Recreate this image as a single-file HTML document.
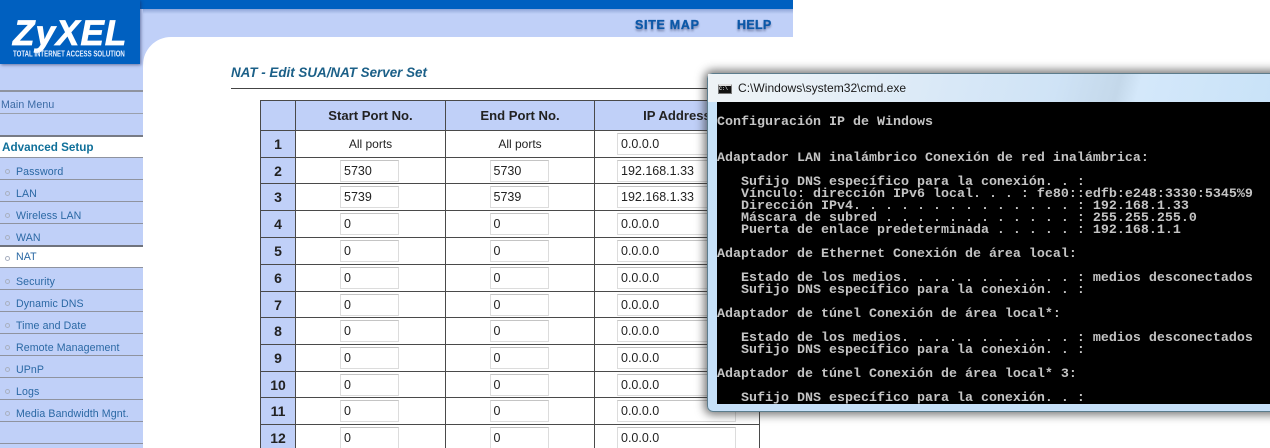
<!DOCTYPE html>
<html><head><meta charset="utf-8"><style>
html,body{margin:0;padding:0;background:#fff}
#p{position:relative;width:1270px;height:448px;overflow:hidden;background:#fff;font-family:"Liberation Sans",Arial,sans-serif}
.a{position:absolute}
.m{position:absolute;left:0;width:143px;height:21px;font-size:10.6px;line-height:21px;color:#2a68a4;border-bottom:1px solid #8f939f;box-sizing:content-box;letter-spacing:.1px}
.m span{position:absolute;left:16px;top:4px;white-space:nowrap}
.m i{position:absolute;left:5px;top:11px;width:3px;height:3px;border:1px solid #a8b0c0;border-radius:50%}
table{position:absolute;left:260px;top:100px;border-collapse:collapse;table-layout:fixed;width:500px;font-size:12px;color:#222}
td{border:1px solid #4a4a4a;padding:0;text-align:center;height:26px;background:#fff;box-sizing:border-box}
td.n{background:#c0d0f8;font-weight:bold;font-size:14px;color:#222}
th{border:1px solid #4a4a4a;background:#c0d0f8;font-size:13.1px;color:#222;height:30px;padding:0;box-sizing:border-box}
td b{display:block;font-weight:normal;box-sizing:border-box;height:22px;line-height:21px;width:59px;margin:0 auto;position:relative;left:-1px;text-align:left;padding-left:3px;border:1px solid #dcdcdc;border-top-color:#c4c4c4;font-size:12.5px;background:#fff}
td b.w{width:119px;margin-left:22px;padding-left:3px;left:0}
#cmd{position:absolute;left:707px;top:73px;width:581px;height:339px;border-radius:6px 0 0 6px;background:linear-gradient(#e8f2fb,#c8e2f8 28px,#c6e0f8);box-shadow:0 0 9px 3px rgba(40,40,40,.62);border:1px solid #5c7c8c;box-sizing:border-box}
#tb{position:absolute;left:0;top:0;right:0;height:28px;background:linear-gradient(105deg,#eef3f6 0,#e9f1f7 90px,#d8e8f7 240px,#cfe3f6 340px,#c4d8ea 400px,#d4e8fa 420px,#c8e2f8 560px)}
#blk{position:absolute;left:9px;top:28px;width:570px;height:302px;background:#000;overflow:hidden}
pre{position:absolute;left:0;top:3px;margin:0;font-family:"Liberation Mono",monospace;font-weight:bold;font-size:13.33px;line-height:12px;color:#c4c4c4;white-space:pre}
</style></head><body><div id="p">
<div class="a" style="left:0;top:0;width:793px;height:9px;background:#0060c0"></div>
<div class="a" style="left:140px;top:9px;width:653px;height:5px;background:linear-gradient(#8fa6d8,#c0d0f8)"></div>
<div class="a" style="left:140px;top:14px;width:653px;height:23px;background:#c0d0f8"></div>
<div class="a" style="left:0;top:64px;width:143px;height:384px;background:#c0d0f8"></div>
<div class="a" style="left:140px;top:9px;width:3px;height:60px;background:#c0d0f8"></div>
<div class="a" style="left:143px;top:37px;width:40px;height:40px;background:#c0d0f8"></div>
<div class="a" style="left:143px;top:37px;width:650px;height:411px;background:#fff;border-radius:28px 0 0 0"></div>
<div class="a" style="left:793px;top:37px;width:477px;height:411px;background:#fff"></div>
<div class="a" style="left:0;top:0;width:140px;height:64px;background:#0060c0;box-shadow:1px 1px 3px rgba(30,40,90,.55)"></div>
<div class="a" style="left:13px;top:16px;width:120px;color:#fff;font-weight:bold;font-style:italic;font-size:35px;line-height:36px;letter-spacing:1.1px;-webkit-text-stroke:.8px #fff;white-space:nowrap">ZyXEL</div>
<div class="a" style="left:13px;top:50px;color:#e8f0ff;font-weight:bold;font-size:6.1px;line-height:10px;white-space:nowrap;letter-spacing:0;transform:scaleY(1.3);transform-origin:0 50%">TOTAL INTERNET ACCESS SOLUTION</div>
<div class="a" style="left:635px;top:18px;color:#0c58a8;font-weight:bold;font-size:12.5px;letter-spacing:.7px;line-height:15px;-webkit-text-stroke:.3px #0c58a8;text-shadow:0 2px 2px rgba(40,50,90,.55);white-space:nowrap">SITE MAP</div>
<div class="a" style="left:737px;top:18px;color:#0c58a8;font-weight:bold;font-size:12.5px;letter-spacing:.3px;line-height:15px;-webkit-text-stroke:.3px #0c58a8;text-shadow:0 2px 2px rgba(40,50,90,.55);white-space:nowrap">HELP</div>

<div class="a" style="left:0;top:90px;width:143px;height:2px;background:#8f939f"></div>
<div class="m" style="top:94px;border:0;color:#3a6aa4"><span style="left:1px;top:1px">Main Menu</span></div>
<div class="a" style="left:0;top:113px;width:143px;height:1px;background:#9aa0ac"></div>
<div class="a" style="left:0;top:135px;width:143px;height:2px;background:#777b85"></div>
<div class="a" style="left:0;top:137px;width:143px;height:20px;background:#fff;color:#10709a;font-weight:bold;font-size:11.7px;line-height:22px;text-indent:2px">Advanced Setup</div>
<div class="a" style="left:0;top:157px;width:143px;height:1px;background:#8f939f"></div>
<div class="m" style="top:158px"><i></i><span>Password</span></div>
<div class="m" style="top:180px"><i></i><span>LAN</span></div>
<div class="m" style="top:202px"><i></i><span>Wireless LAN</span></div>
<div class="m" style="top:224px;border-bottom:2px solid #6f737d"><i></i><span>WAN</span></div>
<div class="m" style="top:247px;height:20px;background:#fff;line-height:20px"><i style="top:9px"></i><span style="top:0">NAT</span></div>
<div class="m" style="top:268px"><i></i><span>Security</span></div>
<div class="m" style="top:290px"><i></i><span>Dynamic DNS</span></div>
<div class="m" style="top:312px"><i></i><span>Time and Date</span></div>
<div class="m" style="top:334px"><i></i><span>Remote Management</span></div>
<div class="m" style="top:356px"><i></i><span>UPnP</span></div>
<div class="m" style="top:378px"><i></i><span>Logs</span></div>
<div class="m" style="top:400px"><i></i><span>Media Bandwidth Mgnt.</span></div>
<div class="m" style="top:422px"></div>

<div class="a" style="left:231px;top:64px;color:#1c6088;font-weight:bold;font-style:italic;font-size:13.4px;line-height:17px;white-space:nowrap">NAT - Edit SUA/NAT Server Set</div>
<div class="a" style="left:231px;top:88px;width:530px;height:1px;background:#444"></div>

<table>
<colgroup><col style="width:35px"><col style="width:150px"><col style="width:149px"><col style="width:165px"></colgroup>
<tr><th></th><th>Start Port No.</th><th>End Port No.</th><th>IP Address</th></tr>
<tr style="height:27px"><td class="n">1</td><td>All ports</td><td>All ports</td><td><b class="w">0.0.0.0</b></td></tr>
<tr><td class="n">2</td><td><b>5730</b></td><td><b>5730</b></td><td><b class="w">192.168.1.33</b></td></tr>
<tr style="height:27px"><td class="n">3</td><td><b>5739</b></td><td><b>5739</b></td><td><b class="w">192.168.1.33</b></td></tr>
<tr style="height:27px"><td class="n">4</td><td><b>0</b></td><td><b>0</b></td><td><b class="w">0.0.0.0</b></td></tr>
<tr style="height:27px"><td class="n">5</td><td><b>0</b></td><td><b>0</b></td><td><b class="w">0.0.0.0</b></td></tr>
<tr style="height:27px"><td class="n">6</td><td><b>0</b></td><td><b>0</b></td><td><b class="w">0.0.0.0</b></td></tr>
<tr><td class="n">7</td><td><b>0</b></td><td><b>0</b></td><td><b class="w">0.0.0.0</b></td></tr>
<tr style="height:27px"><td class="n">8</td><td><b>0</b></td><td><b>0</b></td><td><b class="w">0.0.0.0</b></td></tr>
<tr style="height:27px"><td class="n">9</td><td><b>0</b></td><td><b>0</b></td><td><b class="w">0.0.0.0</b></td></tr>
<tr><td class="n">10</td><td><b>0</b></td><td><b>0</b></td><td><b class="w">0.0.0.0</b></td></tr>
<tr style="height:27px"><td class="n">11</td><td><b>0</b></td><td><b>0</b></td><td><b class="w">0.0.0.0</b></td></tr>
<tr style="height:27px"><td class="n">12</td><td><b>0</b></td><td><b>0</b></td><td><b class="w">0.0.0.0</b></td></tr>
</table>

<div id="cmd">
<div id="tb"></div>
<div class="a" style="left:10px;top:10px;width:14px;height:10px;background:#111;border:1px solid #777;box-sizing:border-box;border-top:2px solid #ddd;color:#ddd;font:bold 5px/7px 'Liberation Mono',monospace;overflow:hidden">C:\</div>
<div class="a" style="left:30px;top:7px;font-size:12.05px;line-height:15px;color:#1a1a1a;white-space:nowrap">C:\Windows\system32\cmd.exe</div>
<div id="blk"><pre>

Configuración IP de Windows


Adaptador LAN inalámbrico Conexión de red inalámbrica:

   Sufijo DNS específico para la conexión. . :
   Vínculo: dirección IPv6 local. . . : fe80::edfb:e248:3330:5345%9
   Dirección IPv4. . . . . . . . . . . . . . : 192.168.1.33
   Máscara de subred . . . . . . . . . . . . : 255.255.255.0
   Puerta de enlace predeterminada . . . . . : 192.168.1.1

Adaptador de Ethernet Conexión de área local:

   Estado de los medios. . . . . . . . . . . : medios desconectados
   Sufijo DNS específico para la conexión. . :

Adaptador de túnel Conexión de área local*:

   Estado de los medios. . . . . . . . . . . : medios desconectados
   Sufijo DNS específico para la conexión. . :

Adaptador de túnel Conexión de área local* 3:

   Sufijo DNS específico para la conexión. . :</pre></div>
</div>
</div></body></html>
